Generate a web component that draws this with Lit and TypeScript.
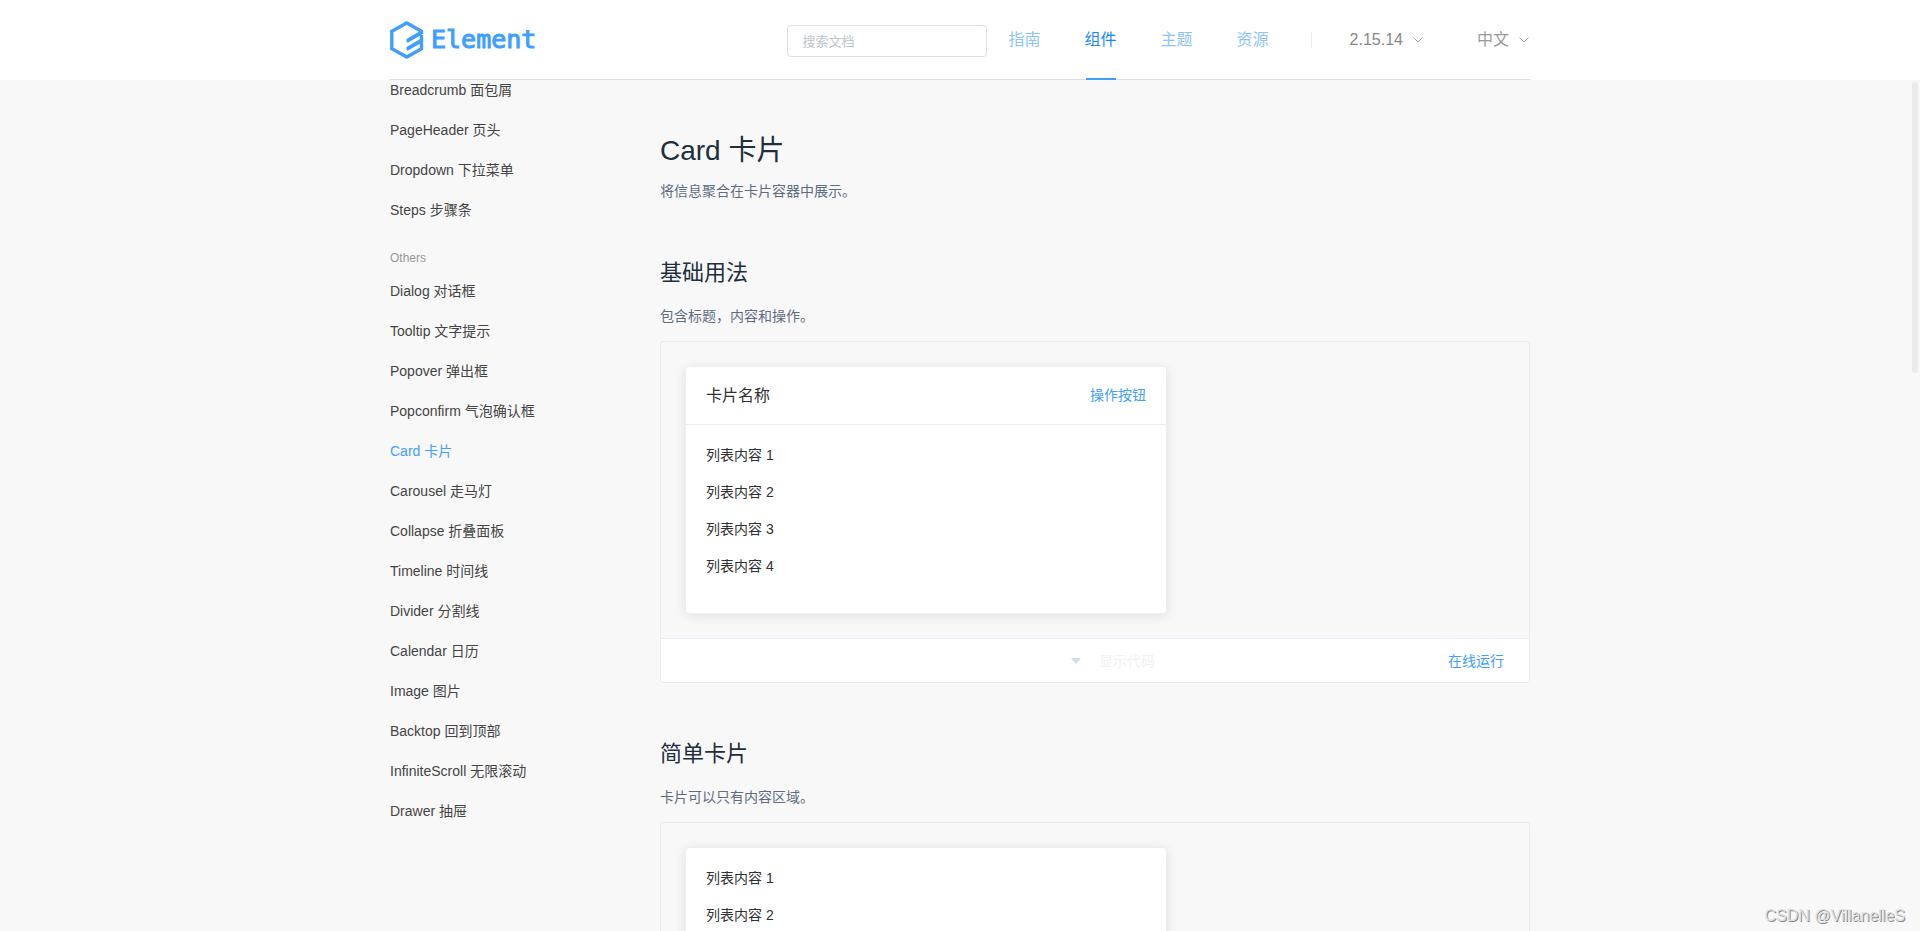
import { LitElement, html, css, svg } from "lit";
import { customElement, property } from "lit/decorators.js";

const chevron = svg`<svg class="chevron" viewBox="0 0 10 6" width="10" height="6" aria-hidden="true"><path d="M0.5 0.5 L5 5 L9.5 0.5" fill="none" stroke="currentColor"/></svg>`;

@customElement("site-header")
export class SiteHeader extends LitElement {
  static styles = css`
    :host { display: block; background: #fff; }
    .bar {
      max-width: 1140px; height: 80px; margin: 0 auto; box-sizing: border-box;
      border-bottom: 1px solid #dcdfe6; display: flex; align-items: center;
    }
    .logo { display: flex; align-items: center; gap: 7px; color: #409eff; text-decoration: none; margin-right: auto; }
    .word { font-family: "DejaVu Sans Mono", monospace; font-size: 25px; line-height: 38px; -webkit-text-stroke: 1px #409eff; }
    .search {
      width: 200px; height: 32px; box-sizing: border-box; border: 1px solid #dcdfe6; border-radius: 4px;
      padding: 0 15px; font: 13px/30px "Liberation Sans", "Noto Sans CJK SC", sans-serif; color: #606266;
      margin: 3px 22px 0 0; background: #fff; outline: none;
    }
    .search::placeholder { color: #c0c4cc; }
    .nav { display: flex; gap: 44px; align-self: stretch; }
    .nav a {
      position: relative; color: #1989fa; opacity: 0.5; text-decoration: none; font-size: 16px; line-height: 80px;
    }
    .nav a.active { opacity: 1; }
    .nav a.active::after {
      content: ""; position: absolute; left: 1px; right: 1px; bottom: -1px; height: 2px; background: #409eff;
    }
    .sep { width: 1px; height: 16px; background: #ebebeb; margin: 0 38px 0 42px; }
    .drop {
      border: 0; background: none; padding: 0 1px 0 0; color: #888; font: 16px/24px "Liberation Sans", "Noto Sans CJK SC", sans-serif;
      display: flex; align-items: center; gap: 10px;
    }
    .drop + .drop { margin-left: 53px; color: #999; }
    .chevron { color: #aaa; }
  `;

  render() {
    return html`
      <header class="bar">
        <a class="logo" href="#" aria-label="Element">
          <svg viewBox="0 0 34 38" width="34" height="38" aria-hidden="true">
            <path d="M31.5 13 V10.3 L16.8 2 L1.8 10.3 V27.7 L16.8 36 L31.5 27.7 V14" fill="none" stroke="#409eff" stroke-width="3.4"/>
            <path d="M16.5 18 L32 9 V13.5 L19 21 Q16.500 22.500 16.500 20 Z M16.500 26 L32 17 V21.500 L19 29 Q16.500 30.500 16.500 28 Z" fill="#409eff"/>
          </svg>
          <span class="word">Element</span>
        </a>
        <input class="search" type="text" placeholder="搜索文档" aria-label="搜索文档" />
        <nav class="nav">
          <a href="#guide">指南</a>
          <a href="#component" class="active">组件</a>
          <a href="#theme">主题</a>
          <a href="#resource">资源</a>
        </nav>
        <span class="sep"></span>
        <button class="drop" type="button">2.15.14 ${chevron}</button>
        <button class="drop" type="button">中文 ${chevron}</button>
      </header>
    `;
  }
}

@customElement("side-nav")
export class SideNav extends LitElement {
  static styles = css`
    :host { display: block; }
    .list { list-style: none; margin: 0; padding: 0; display: grid; gap: 20px; }
    .list a { display: block; font-size: 14px; line-height: 20px; color: #444; text-decoration: none; white-space: nowrap; }
    .list a.active { color: #409eff; }
    .group { margin: 29px 0 14px; font-size: 12px; line-height: 18px; font-weight: 400; color: #999; }
  `;

  private navigation = ["Breadcrumb 面包屑", "PageHeader 页头", "Dropdown 下拉菜单", "Steps 步骤条"];
  private others = [
    "Dialog 对话框", "Tooltip 文字提示", "Popover 弹出框", "Popconfirm 气泡确认框", "Card 卡片",
    "Carousel 走马灯", "Collapse 折叠面板", "Timeline 时间线", "Divider 分割线", "Calendar 日历",
    "Image 图片", "Backtop 回到顶部", "InfiniteScroll 无限滚动", "Drawer 抽屉",
  ];

  private links(items: string[]) {
    return html`<ul class="list">
      ${items.map((t) => html`<li><a href="#" class=${t.startsWith("Card") ? "active" : ""}>${t}</a></li>`)}
    </ul>`;
  }

  render() {
    return html`<nav>${this.links(this.navigation)}<h4 class="group">Others</h4>${this.links(this.others)}</nav>`;
  }
}

@customElement("demo-section")
export class DemoSection extends LitElement {
  @property() heading = "";
  @property() note = "";
  @property() cardTitle = "";

  static styles = css`
    :host { display: block; }
    h2 { margin: 0; font-size: 22px; line-height: 32px; font-weight: 400; color: #1f2f3d; }
    .note { margin: 16px 0 14px; font-size: 14px; line-height: 22px; color: #5e6d82; }
    .block { border: 1px solid #ebebeb; border-radius: 3px; overflow: hidden; }
    .source { padding: 24px; }
    .card {
      max-width: 480px; background: #fff; border: 1px solid #ebeef5; border-radius: 4px;
      box-shadow: 0 2px 12px 0 rgba(0, 0, 0, 0.1); color: #303133;
    }
    .head {
      display: flex; align-items: center; justify-content: space-between; padding: 18px 20px;
      border-bottom: 1px solid #ebeef5; font-size: 16px; line-height: 21px;
    }
    .head button {
      border: 0; background: none; padding: 0; color: #409eff;
      font: 14px/21px "Liberation Sans", "Noto Sans CJK SC", sans-serif;
    }
    .items { list-style: none; margin: 0; padding: 21px 20px 19px; }
    .items li { font-size: 14px; line-height: 19px; padding-bottom: 18px; }
    .control {
      height: 44px; box-sizing: border-box; border-top: 1px solid #eaeefb; background: #fff;
      display: grid; grid-template-columns: 1fr auto 1fr; align-items: center; padding: 0 25px;
    }
    .control button { border: 0; background: none; font: 14px/20px "Liberation Sans", "Noto Sans CJK SC", sans-serif; padding: 0; }
    .control .toggle { grid-column: 2; display: flex; align-items: center; gap: 18px; padding-left: 36px; color: #eff1f4; }
    .arrow { border: 5px solid transparent; border-top: 6px solid #d3dce6; border-bottom: 0; }
    .control .run { justify-self: end; color: #409eff; }
  `;

  render() {
    return html`
      <h2>${this.heading}</h2>
      <p class="note">${this.note}</p>
      <div class="block">
        <div class="source">
          <div class="card">
            ${this.cardTitle
              ? html`<div class="head"><span>${this.cardTitle}</span><button type="button">操作按钮</button></div>`
              : null}
            <ul class="items">${[1, 2, 3, 4].map((n) => html`<li>列表内容 ${n}</li>`)}</ul>
          </div>
        </div>
        <div class="control">
          <button class="toggle" type="button"><span class="arrow"></span>显示代码</button>
          <button class="run" type="button">在线运行</button>
        </div>
      </div>
    `;
  }
}

@customElement("app-root")
export class AppRoot extends LitElement {
  static styles = css`
    :host {
      display: flex; flex-direction: column; height: 100vh; overflow: hidden; position: relative;
      background: #f8f8f8; font-family: "Liberation Sans", "Noto Sans CJK SC", sans-serif;
    }
    site-header { flex: none; }
    .scroll { flex: 1; min-height: 0; overflow-y: auto; scrollbar-width: none; }
    .page { max-width: 1140px; margin: 0 auto; display: grid; grid-template-columns: 240px minmax(0, 1fr); gap: 30px; }
    main { padding-top: 51px; }
    h1 { margin: 0; font-size: 28px; line-height: 40px; font-weight: 400; color: #1f2f3d; }
    .lead { margin: 9px 0 55px; font-size: 14px; line-height: 22px; color: #5e6d82; }
    demo-section { margin-bottom: 55px; }
    .thumb { position: absolute; right: 2px; top: 82px; width: 6px; height: 31.3vh; border-radius: 3px; background: #e9ebeb; }
    .mark { position: absolute; right: 15px; bottom: 4px; font-size: 16px; line-height: 22px; color: #e0e0e0; text-shadow: 1px 1px 0 #888; }
  `;

  render() {
    return html`
      <site-header></site-header>
      <div class="scroll">
        <div class="page">
          <side-nav></side-nav>
          <main>
            <h1>Card 卡片</h1>
            <p class="lead">将信息聚合在卡片容器中展示。</p>
            <demo-section heading="基础用法" note="包含标题，内容和操作。" cardTitle="卡片名称"></demo-section>
            <demo-section heading="简单卡片" note="卡片可以只有内容区域。"></demo-section>
          </main>
        </div>
      </div>
      <div class="thumb"></div>
      <div class="mark">CSDN @VillanelleS</div>
    `;
  }
}
